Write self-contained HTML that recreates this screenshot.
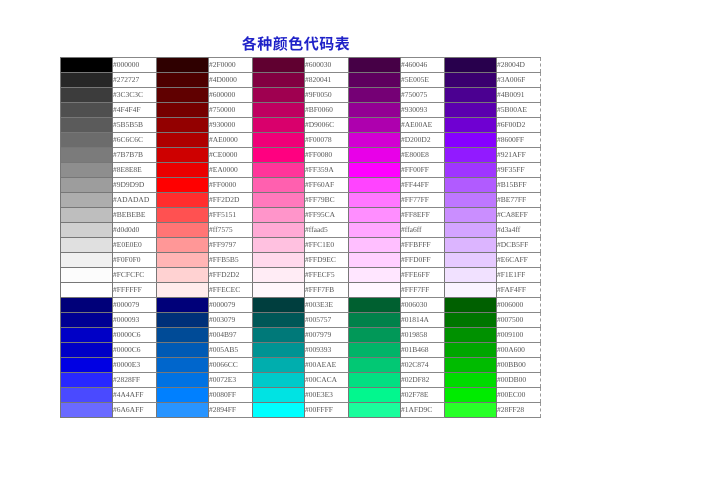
<!DOCTYPE html>
<html><head><meta charset="utf-8"><style>
html,body{margin:0;padding:0;background:#fff;width:707px;height:500px;overflow:hidden}
h1{position:absolute;left:0;width:592px;top:33px;margin:0;text-align:center;font:bold 15px "Liberation Sans","Noto Sans CJK SC",sans-serif;color:#1f22c8;letter-spacing:0.5px}
table{position:absolute;left:60px;top:57px;border-collapse:collapse;table-layout:fixed}
td{height:14px;padding:0;border:1px solid #777;font:7.5px "Liberation Serif",serif;color:#555;white-space:nowrap;overflow:hidden;line-height:14px}
td.s{width:51px}
td.c{width:43px;border-left:1px solid #777;border-right:1px dashed #999;border-top:1px solid #888;border-bottom:1px solid #888;background:#fff;padding-left:0}
</style></head><body>
<h1>各种颜色代码表</h1>
<table>
<tr><td class="s" style="background:#000000"></td><td class="c">#000000</td><td class="s" style="background:#2F0000"></td><td class="c">#2F0000</td><td class="s" style="background:#600030"></td><td class="c">#600030</td><td class="s" style="background:#460046"></td><td class="c">#460046</td><td class="s" style="background:#28004D"></td><td class="c">#28004D</td></tr>
<tr><td class="s" style="background:#272727"></td><td class="c">#272727</td><td class="s" style="background:#4D0000"></td><td class="c">#4D0000</td><td class="s" style="background:#820041"></td><td class="c">#820041</td><td class="s" style="background:#5E005E"></td><td class="c">#5E005E</td><td class="s" style="background:#3A006F"></td><td class="c">#3A006F</td></tr>
<tr><td class="s" style="background:#3C3C3C"></td><td class="c">#3C3C3C</td><td class="s" style="background:#600000"></td><td class="c">#600000</td><td class="s" style="background:#9F0050"></td><td class="c">#9F0050</td><td class="s" style="background:#750075"></td><td class="c">#750075</td><td class="s" style="background:#4B0091"></td><td class="c">#4B0091</td></tr>
<tr><td class="s" style="background:#4F4F4F"></td><td class="c">#4F4F4F</td><td class="s" style="background:#750000"></td><td class="c">#750000</td><td class="s" style="background:#BF0060"></td><td class="c">#BF0060</td><td class="s" style="background:#930093"></td><td class="c">#930093</td><td class="s" style="background:#5B00AE"></td><td class="c">#5B00AE</td></tr>
<tr><td class="s" style="background:#5B5B5B"></td><td class="c">#5B5B5B</td><td class="s" style="background:#930000"></td><td class="c">#930000</td><td class="s" style="background:#D9006C"></td><td class="c">#D9006C</td><td class="s" style="background:#AE00AE"></td><td class="c">#AE00AE</td><td class="s" style="background:#6F00D2"></td><td class="c">#6F00D2</td></tr>
<tr><td class="s" style="background:#6C6C6C"></td><td class="c">#6C6C6C</td><td class="s" style="background:#AE0000"></td><td class="c">#AE0000</td><td class="s" style="background:#F00078"></td><td class="c">#F00078</td><td class="s" style="background:#D200D2"></td><td class="c">#D200D2</td><td class="s" style="background:#8600FF"></td><td class="c">#8600FF</td></tr>
<tr><td class="s" style="background:#7B7B7B"></td><td class="c">#7B7B7B</td><td class="s" style="background:#CE0000"></td><td class="c">#CE0000</td><td class="s" style="background:#FF0080"></td><td class="c">#FF0080</td><td class="s" style="background:#E800E8"></td><td class="c">#E800E8</td><td class="s" style="background:#921AFF"></td><td class="c">#921AFF</td></tr>
<tr><td class="s" style="background:#8E8E8E"></td><td class="c">#8E8E8E</td><td class="s" style="background:#EA0000"></td><td class="c">#EA0000</td><td class="s" style="background:#FF359A"></td><td class="c">#FF359A</td><td class="s" style="background:#FF00FF"></td><td class="c">#FF00FF</td><td class="s" style="background:#9F35FF"></td><td class="c">#9F35FF</td></tr>
<tr><td class="s" style="background:#9D9D9D"></td><td class="c">#9D9D9D</td><td class="s" style="background:#FF0000"></td><td class="c">#FF0000</td><td class="s" style="background:#FF60AF"></td><td class="c">#FF60AF</td><td class="s" style="background:#FF44FF"></td><td class="c">#FF44FF</td><td class="s" style="background:#B15BFF"></td><td class="c">#B15BFF</td></tr>
<tr><td class="s" style="background:#ADADAD"></td><td class="c">#ADADAD</td><td class="s" style="background:#FF2D2D"></td><td class="c">#FF2D2D</td><td class="s" style="background:#FF79BC"></td><td class="c">#FF79BC</td><td class="s" style="background:#FF77FF"></td><td class="c">#FF77FF</td><td class="s" style="background:#BE77FF"></td><td class="c">#BE77FF</td></tr>
<tr><td class="s" style="background:#BEBEBE"></td><td class="c">#BEBEBE</td><td class="s" style="background:#FF5151"></td><td class="c">#FF5151</td><td class="s" style="background:#FF95CA"></td><td class="c">#FF95CA</td><td class="s" style="background:#FF8EFF"></td><td class="c">#FF8EFF</td><td class="s" style="background:#CA8EFF"></td><td class="c">#CA8EFF</td></tr>
<tr><td class="s" style="background:#d0d0d0"></td><td class="c">#d0d0d0</td><td class="s" style="background:#ff7575"></td><td class="c">#ff7575</td><td class="s" style="background:#ffaad5"></td><td class="c">#ffaad5</td><td class="s" style="background:#ffa6ff"></td><td class="c">#ffa6ff</td><td class="s" style="background:#d3a4ff"></td><td class="c">#d3a4ff</td></tr>
<tr><td class="s" style="background:#E0E0E0"></td><td class="c">#E0E0E0</td><td class="s" style="background:#FF9797"></td><td class="c">#FF9797</td><td class="s" style="background:#FFC1E0"></td><td class="c">#FFC1E0</td><td class="s" style="background:#FFBFFF"></td><td class="c">#FFBFFF</td><td class="s" style="background:#DCB5FF"></td><td class="c">#DCB5FF</td></tr>
<tr><td class="s" style="background:#F0F0F0"></td><td class="c">#F0F0F0</td><td class="s" style="background:#FFB5B5"></td><td class="c">#FFB5B5</td><td class="s" style="background:#FFD9EC"></td><td class="c">#FFD9EC</td><td class="s" style="background:#FFD0FF"></td><td class="c">#FFD0FF</td><td class="s" style="background:#E6CAFF"></td><td class="c">#E6CAFF</td></tr>
<tr><td class="s" style="background:#FCFCFC"></td><td class="c">#FCFCFC</td><td class="s" style="background:#FFD2D2"></td><td class="c">#FFD2D2</td><td class="s" style="background:#FFECF5"></td><td class="c">#FFECF5</td><td class="s" style="background:#FFE6FF"></td><td class="c">#FFE6FF</td><td class="s" style="background:#F1E1FF"></td><td class="c">#F1E1FF</td></tr>
<tr><td class="s" style="background:#FFFFFF"></td><td class="c">#FFFFFF</td><td class="s" style="background:#FFECEC"></td><td class="c">#FFECEC</td><td class="s" style="background:#FFF7FB"></td><td class="c">#FFF7FB</td><td class="s" style="background:#FFF7FF"></td><td class="c">#FFF7FF</td><td class="s" style="background:#FAF4FF"></td><td class="c">#FAF4FF</td></tr>
<tr><td class="s" style="background:#000079"></td><td class="c">#000079</td><td class="s" style="background:#000079"></td><td class="c">#000079</td><td class="s" style="background:#003E3E"></td><td class="c">#003E3E</td><td class="s" style="background:#006030"></td><td class="c">#006030</td><td class="s" style="background:#006000"></td><td class="c">#006000</td></tr>
<tr><td class="s" style="background:#000093"></td><td class="c">#000093</td><td class="s" style="background:#003079"></td><td class="c">#003079</td><td class="s" style="background:#005757"></td><td class="c">#005757</td><td class="s" style="background:#01814A"></td><td class="c">#01814A</td><td class="s" style="background:#007500"></td><td class="c">#007500</td></tr>
<tr><td class="s" style="background:#0000C6"></td><td class="c">#0000C6</td><td class="s" style="background:#004B97"></td><td class="c">#004B97</td><td class="s" style="background:#007979"></td><td class="c">#007979</td><td class="s" style="background:#019858"></td><td class="c">#019858</td><td class="s" style="background:#009100"></td><td class="c">#009100</td></tr>
<tr><td class="s" style="background:#0000C6"></td><td class="c">#0000C6</td><td class="s" style="background:#005AB5"></td><td class="c">#005AB5</td><td class="s" style="background:#009393"></td><td class="c">#009393</td><td class="s" style="background:#01B468"></td><td class="c">#01B468</td><td class="s" style="background:#00A600"></td><td class="c">#00A600</td></tr>
<tr><td class="s" style="background:#0000E3"></td><td class="c">#0000E3</td><td class="s" style="background:#0066CC"></td><td class="c">#0066CC</td><td class="s" style="background:#00AEAE"></td><td class="c">#00AEAE</td><td class="s" style="background:#02C874"></td><td class="c">#02C874</td><td class="s" style="background:#00BB00"></td><td class="c">#00BB00</td></tr>
<tr><td class="s" style="background:#2828FF"></td><td class="c">#2828FF</td><td class="s" style="background:#0072E3"></td><td class="c">#0072E3</td><td class="s" style="background:#00CACA"></td><td class="c">#00CACA</td><td class="s" style="background:#02DF82"></td><td class="c">#02DF82</td><td class="s" style="background:#00DB00"></td><td class="c">#00DB00</td></tr>
<tr><td class="s" style="background:#4A4AFF"></td><td class="c">#4A4AFF</td><td class="s" style="background:#0080FF"></td><td class="c">#0080FF</td><td class="s" style="background:#00E3E3"></td><td class="c">#00E3E3</td><td class="s" style="background:#02F78E"></td><td class="c">#02F78E</td><td class="s" style="background:#00EC00"></td><td class="c">#00EC00</td></tr>
<tr><td class="s" style="background:#6A6AFF"></td><td class="c">#6A6AFF</td><td class="s" style="background:#2894FF"></td><td class="c">#2894FF</td><td class="s" style="background:#00FFFF"></td><td class="c">#00FFFF</td><td class="s" style="background:#1AFD9C"></td><td class="c">#1AFD9C</td><td class="s" style="background:#28FF28"></td><td class="c">#28FF28</td></tr>
</table>
</body></html>
